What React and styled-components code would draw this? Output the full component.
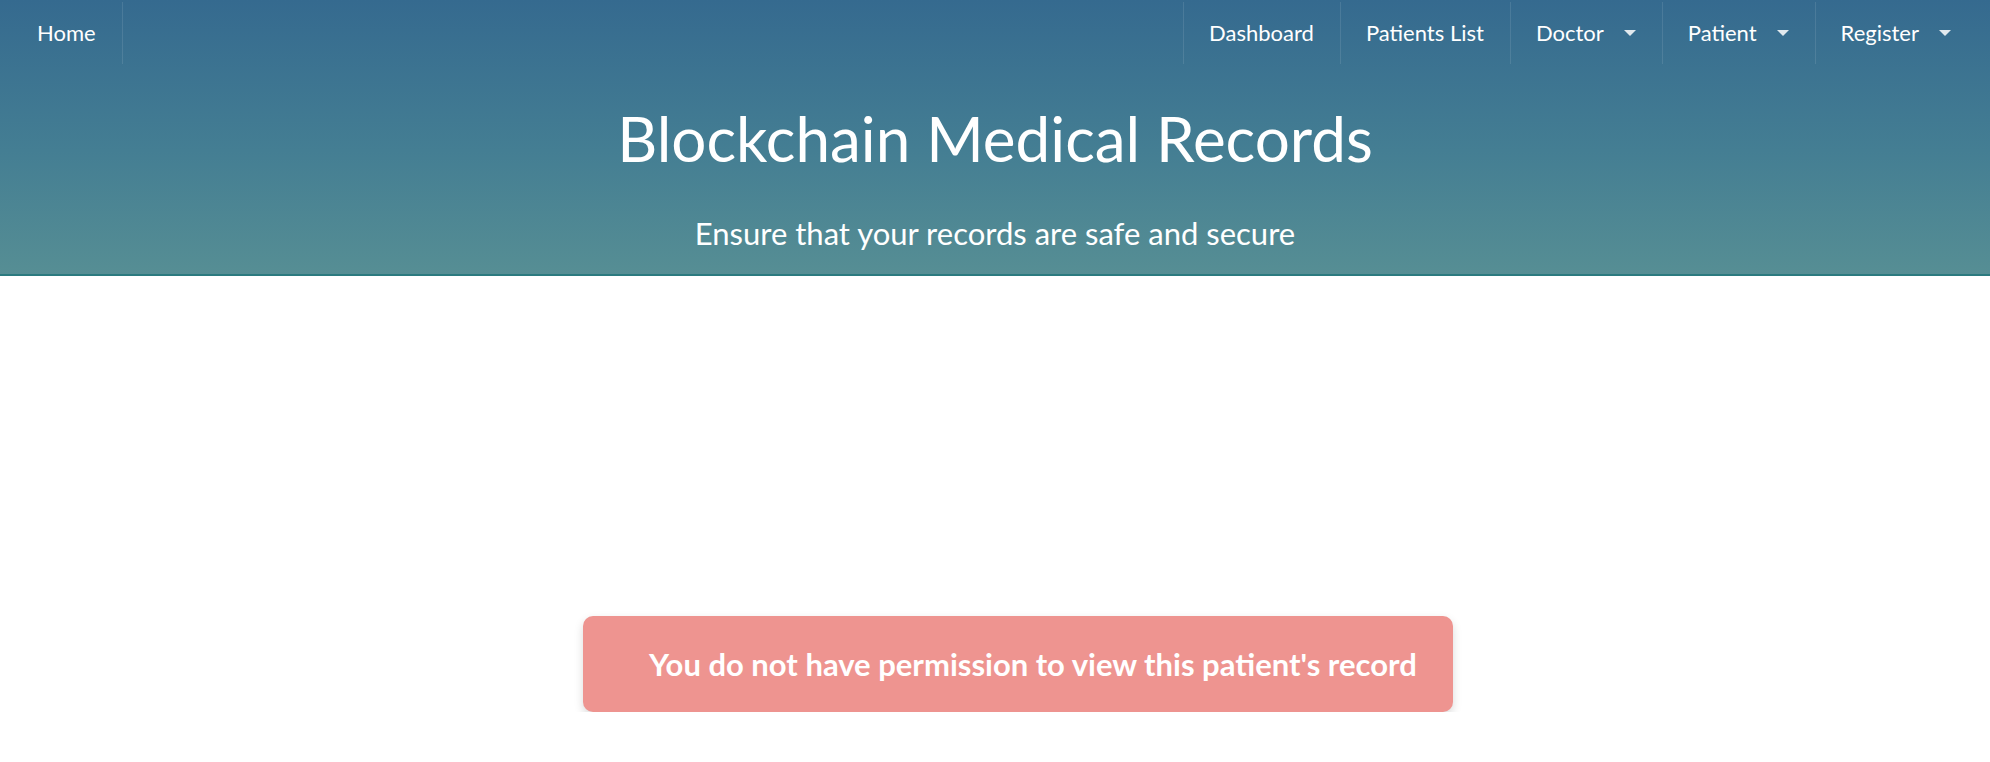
import React from 'react';
import styled, { createGlobalStyle } from "styled-components";

const leftLinks = ['Home'];
const rightLinks = [
    { label: 'Dashboard' },
    { label: 'Patients List' },
    { label: 'Doctor', dropdown: true },
    { label: 'Patient', dropdown: true },
    { label: 'Register', dropdown: true },
];

export default class App extends React.PureComponent {
    render() {
        return (
            <Root>
                <GlobalStyle />
                <Header>
                    <Menu>
                        <MenuGroup>
                            {leftLinks.map((label) => (
                                <MenuItem key={label} side="left">{label}</MenuItem>
                            ))}
                        </MenuGroup>
                        <MenuGroup right>
                            {rightLinks.map((link) => (
                                <MenuItem key={link.label} side="right">
                                    {link.label}
                                    {link.dropdown && <Caret />}
                                </MenuItem>
                            ))}
                        </MenuGroup>
                    </Menu>
                    <Title>Blockchain Medical Records</Title>
                    <Subtitle>Ensure that your records are safe and secure</Subtitle>
                </Header>
                <Content>
                    <Alert>You do not have permission to view this patient's record</Alert>
                </Content>
            </Root>
        );
    }
}

const GlobalStyle = createGlobalStyle`
    html, body {
        margin: 0;
        padding: 0;
        background: #fff;
        font-family: Lato, "Open Sans", sans-serif;
    }
`;

const Root = styled.div`
    width: 100%;
    display: flex;
    flex-direction: column;
`;

const Header = styled.header`
    display: flex;
    flex-direction: column;
    align-items: center;
    padding-bottom: 25px;
    background: linear-gradient(180deg, #356a8f 0%, #447e93 55%, #568e94 100%);
    border-bottom: 2px solid #2b7a7f;
`;

const Menu = styled.nav`
    width: 100%;
    height: 66px;
    display: flex;
    flex-direction: row;
    justify-content: space-between;
`;

const MenuGroup = styled.div`
    display: flex;
    flex-direction: row;
    padding: 2px ${(props) => (props.right ? '13px' : '0')} 2px ${(props) => (props.right ? '0' : '11px')};
`;

const MenuItem = styled.a`
    display: flex;
    align-items: center;
    padding: 0 26px 0 ${(props) => (props.side === 'right' ? '25px' : '26px')};
    font-size: 22px;
    line-height: 1;
    color: #fff;
    cursor: pointer;
    ${(props) => (props.side === 'right'
        ? 'border-left: 1px solid rgba(255, 255, 255, 0.1);'
        : 'border-right: 1px solid rgba(255, 255, 255, 0.1);')}
`;

const Caret = styled.span`
    width: 0;
    height: 0;
    margin-left: 20px;
    border-left: 6px solid transparent;
    border-right: 6px solid transparent;
    border-top: 6px solid rgba(255, 255, 255, 0.85);
`;

const Title = styled.h1`
    margin: 41px 0 0;
    font-size: 62px;
    font-weight: 400;
    line-height: 1;
    color: #fff;
`;

const Subtitle = styled.h2`
    margin: 49px 0 0;
    font-size: 31px;
    font-weight: 400;
    line-height: 1;
    color: #fff;
`;

const Content = styled.main`
    display: flex;
    justify-content: center;
    padding: 340px 0 0 46px;
`;

const Alert = styled.div`
    width: 870px;
    height: 96px;
    box-sizing: border-box;
    display: flex;
    align-items: center;
    padding: 0 36px 0 66px;
    border-radius: 10px;
    background-color: #ee9490;
    box-shadow: 0 4px 10px rgba(0, 0, 0, 0.15);
    color: #fff;
    font-size: 31px;
    font-weight: 700;
`;
